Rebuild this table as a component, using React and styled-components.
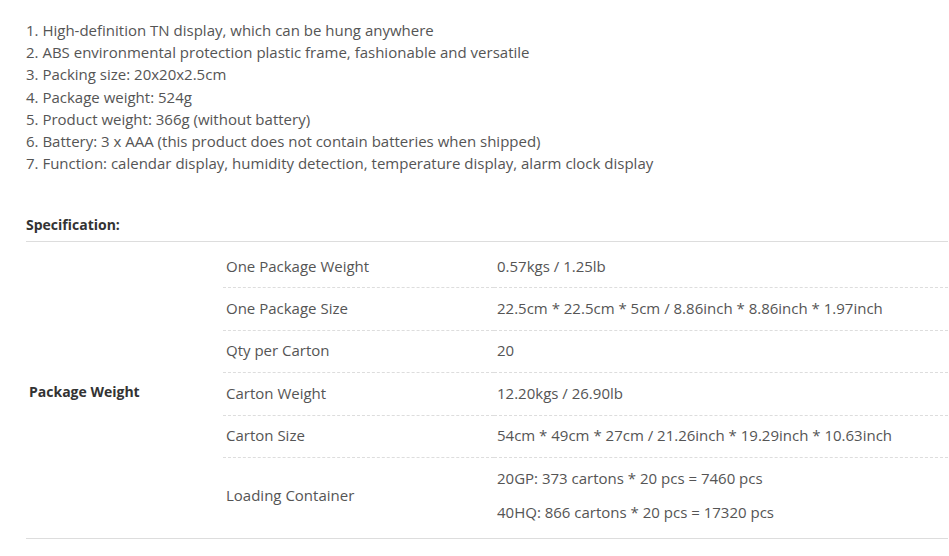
import React from "react";
import styled, { createGlobalStyle } from "styled-components";

const GlobalStyle = createGlobalStyle`
  body {
    margin: 0;
    background: #fff;
    font-family: "Open Sans", "Liberation Sans", sans-serif;
    color: #555;
  }
`;

const features = [
  "1. High-definition TN display, which can be hung anywhere",
  "2. ABS environmental protection plastic frame, fashionable and versatile",
  "3. Packing size: 20x20x2.5cm",
  "4. Package weight: 524g",
  "5. Product weight: 366g (without battery)",
  "6. Battery: 3 x AAA (this product does not contain batteries when shipped)",
  "7. Function: calendar display, humidity detection, temperature display, alarm clock display",
];

const specs = [
  { label: "One Package Weight", values: ["0.57kgs / 1.25lb"], height: 45 },
  { label: "One Package Size", values: ["22.5cm * 22.5cm * 5cm / 8.86inch * 8.86inch * 1.97inch"], height: 43 },
  { label: "Qty per Carton", values: ["20"], height: 42 },
  { label: "Carton Weight", values: ["12.20kgs / 26.90lb"], height: 43 },
  { label: "Carton Size", values: ["54cm * 49cm * 27cm / 21.26inch * 19.29inch * 10.63inch"], height: 42 },
  {
    label: "Loading Container",
    values: ["20GP: 373 cartons * 20 pcs = 7460 pcs", "40HQ: 866 cartons * 20 pcs = 17320 pcs"],
    height: 81,
  },
];

function App() {
  return (
    <Page>
      <GlobalStyle />
      <FeatureList>
        {features.map((f) => (
          <li key={f}>{f}</li>
        ))}
      </FeatureList>
      <Heading>Specification:</Heading>
      <SpecTable>
        <colgroup>
          <col style={{ width: 197 }} />
          <col style={{ width: 271 }} />
          <col />
        </colgroup>
        <tbody>
          {specs.map((row, i) => (
            <Row
              key={row.label}
              $h={row.height}
              $top={i === 0 ? 5 : 0}
              $bottom={i === specs.length - 1 ? 5 : 2}
            >
              {i === 0 && <GroupCell rowSpan={specs.length}>Package Weight</GroupCell>}
              <LabelCell>{row.label}</LabelCell>
              <ValueCell>
                {row.values.map((v) => (
                  <Value key={v}>{v}</Value>
                ))}
              </ValueCell>
            </Row>
          ))}
        </tbody>
      </SpecTable>
    </Page>
  );
}

const Page = styled.div`
  width: 922px;
  padding: 19px 0 0 26px;
  font-size: 15px;
`;

const FeatureList = styled.ul`
  list-style: none;
  margin: 0;
  padding: 0;
  line-height: 22.17px;
  color: #555;
`;

const Heading = styled.h3`
  margin: 40px 0 0;
  padding-bottom: 5px;
  font-size: 14px;
  line-height: 22px;
  font-weight: 700;
  color: #333;
  border-bottom: 1px solid #ddd;
`;

const SpecTable = styled.table`
  width: 922px;
  border-collapse: collapse;
  table-layout: fixed;
  border-bottom: 1px solid #ddd;
`;

const Row = styled.tr`
  height: ${(p) => p.$h}px;
  & > td {
    padding-top: ${(p) => p.$top}px;
    padding-bottom: ${(p) => p.$bottom}px;
  }
`;

const GroupCell = styled.td`
  padding-left: 3px;
  padding-right: 3px;
  font-size: 14px;
  font-weight: 700;
  color: #333;
  vertical-align: middle;
  border-bottom: 1px solid #ddd;
`;

const LabelCell = styled.td`
  padding-left: 3px;
  padding-right: 3px;
  vertical-align: middle;
  border-bottom: 1px dashed #ddd;
  ${Row}:last-child & {
    border-bottom: 1px solid #ddd;
  }
`;

const ValueCell = styled(LabelCell)``;

const Value = styled.div`
  line-height: 22px;
  & + & {
    margin-top: 12px;
  }
`;

export default App;
